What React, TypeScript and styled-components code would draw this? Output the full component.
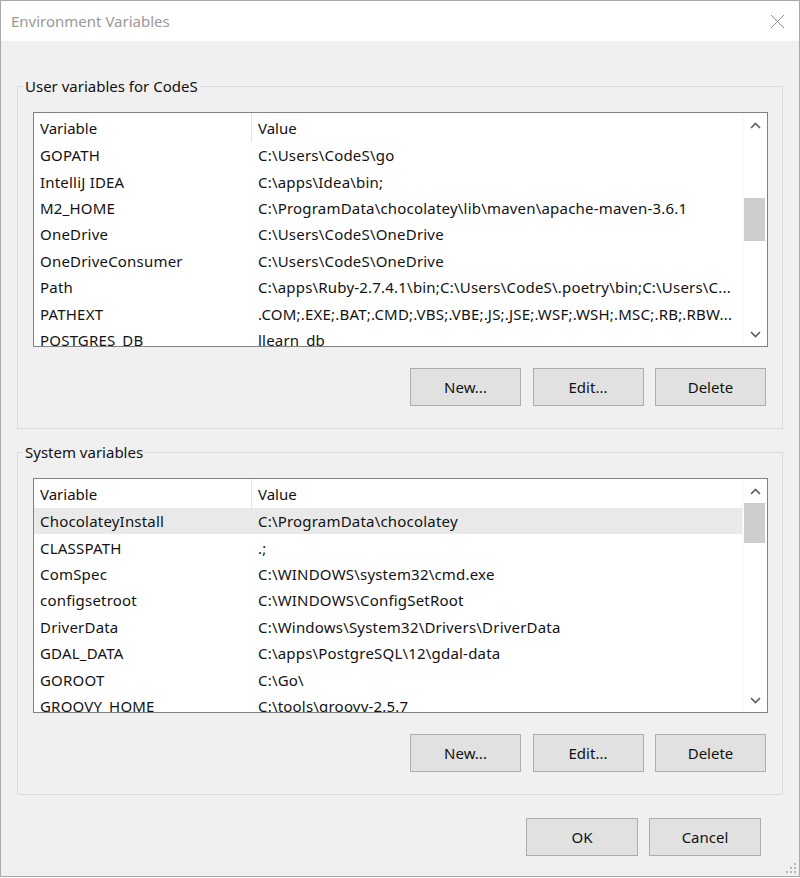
import React from "react";
import styled, { createGlobalStyle } from "styled-components";

const GlobalStyle = createGlobalStyle`
  html, body {
    margin: 0;
    padding: 0;
    background: #ffffff;
  }
  body {
    font-family: "Noto Sans", "Liberation Sans", sans-serif;
    font-size: 15px;
    color: #121212;
  }
  * {
    box-sizing: border-box;
  }
`;

const Window = styled.div`
  position: relative;
  width: 800px;
  height: 877px;
  border: 1px solid #a9a9a9;
  background: #f0f0f0;
  display: flex;
  flex-direction: column;
`;

const TitleBar = styled.div`
  height: 40px;
  flex-shrink: 0;
  background: #ffffff;
  display: flex;
  align-items: center;
  justify-content: space-between;
  padding: 0 14px 0 10px;
  color: #999999;
`;

const Body = styled.div`
  flex: 1;
  display: flex;
  flex-direction: column;
  padding: 35px 15px 0 16px;
`;

const Group = styled.fieldset<{ $gapTop: number }>`
  width: 766px;
  margin: ${(p) => p.$gapTop}px 0 0 0;
  padding: 0;
  border: 1px solid #dcdcdc;
  min-width: 0;
`;

const Legend = styled.legend`
  margin-left: 5px;
  padding: 0 2px;
  line-height: 20px;
  font-size: 15px;
  color: #121212;
`;

const GroupInner = styled.div`
  padding: 16px 14px 22px 15px;
  display: flex;
  flex-direction: column;
`;

const ListView = styled.div`
  height: 235px;
  border: 1px solid #828282;
  background: #ffffff;
  display: flex;
  overflow: hidden;
`;

const Rows = styled.div`
  flex: 1;
  display: flex;
  flex-direction: column;
  overflow: hidden;
  border-right: 1px solid #f3f3f3;
`;

const HeaderRow = styled.div`
  flex-shrink: 0;
  height: 29px;
  display: grid;
  grid-template-columns: 218px 1fr;
  align-items: stretch;
`;

const HeaderCell = styled.div<{ $divider?: boolean }>`
  display: flex;
  align-items: center;
  padding-left: 6px;
  border-right: ${(p) => (p.$divider ? "1px solid #e5e5e5" : "none")};
`;

const Row = styled.div<{ $selected?: boolean }>`
  flex-shrink: 0;
  height: 26.4px;
  display: grid;
  grid-template-columns: 218px 1fr;
  align-items: center;
  background: ${(p) => (p.$selected ? "#e9e9e9" : "transparent")};
`;

const Cell = styled.div`
  padding-left: 6px;
  white-space: nowrap;
  overflow: hidden;
  letter-spacing: 0.2px;
`;

const ScrollBar = styled.div`
  width: 24px;
  flex-shrink: 0;
  display: flex;
  flex-direction: column;
  background: #ffffff;
`;

const ArrowBox = styled.div`
  height: 24px;
  flex-shrink: 0;
  display: flex;
  align-items: center;
  justify-content: center;
  padding-left: 1px;
`;

const Track = styled.div`
  flex: 1;
  display: flex;
  flex-direction: column;
`;

const Thumb = styled.div<{ $offset: number; $size: number }>`
  margin: ${(p) => p.$offset}px 0 0 1px;
  width: 21px;
  height: ${(p) => p.$size}px;
  background: #cdcdcd;
`;

const ButtonRow = styled.div<{ $gapTop: number; $inset: number; $gap: number }>`
  display: flex;
  justify-content: flex-end;
  gap: ${(p) => p.$gap}px;
  margin-top: ${(p) => p.$gapTop}px;
  padding-right: ${(p) => p.$inset}px;
`;

const Button = styled.button<{ $w: number }>`
  width: ${(p) => p.$w}px;
  height: 38px;
  border: 1px solid #adadad;
  background: #e1e1e1;
  font-family: "Noto Sans", "Liberation Sans", sans-serif;
  font-size: 15px;
  color: #121212;
  padding: 0;
  cursor: default;
`;

const Grip = styled.svg`
  position: absolute;
  right: 2px;
  bottom: 2px;
`;

type Variable = { name: string; value: string };

const userVars: Variable[] = [
  { name: "GOPATH", value: "C:\\Users\\CodeS\\go" },
  { name: "IntelliJ IDEA", value: "C:\\apps\\Idea\\bin;" },
  { name: "M2_HOME", value: "C:\\ProgramData\\chocolatey\\lib\\maven\\apache-maven-3.6.1" },
  { name: "OneDrive", value: "C:\\Users\\CodeS\\OneDrive" },
  { name: "OneDriveConsumer", value: "C:\\Users\\CodeS\\OneDrive" },
  { name: "Path", value: "C:\\apps\\Ruby-2.7.4.1\\bin;C:\\Users\\CodeS\\.poetry\\bin;C:\\Users\\C..." },
  { name: "PATHEXT", value: ".COM;.EXE;.BAT;.CMD;.VBS;.VBE;.JS;.JSE;.WSF;.WSH;.MSC;.RB;.RBW..." },
  { name: "POSTGRES_DB", value: "llearn_db" },
];

const systemVars: Variable[] = [
  { name: "ChocolateyInstall", value: "C:\\ProgramData\\chocolatey" },
  { name: "CLASSPATH", value: ".;" },
  { name: "ComSpec", value: "C:\\WINDOWS\\system32\\cmd.exe" },
  { name: "configsetroot", value: "C:\\WINDOWS\\ConfigSetRoot" },
  { name: "DriverData", value: "C:\\Windows\\System32\\Drivers\\DriverData" },
  { name: "GDAL_DATA", value: "C:\\apps\\PostgreSQL\\12\\gdal-data" },
  { name: "GOROOT", value: "C:\\Go\\" },
  { name: "GROOVY_HOME", value: "C:\\tools\\groovy-2.5.7" },
];

function Chevron({ up }: { up?: boolean }) {
  return (
    <svg width="11" height="7" viewBox="0 0 11 7">
      <polyline
        points={up ? "1,6 5.5,1.5 10,6" : "1,1 5.5,5.5 10,1"}
        fill="none"
        stroke="#5f5f5f"
        strokeWidth="1.7"
      />
    </svg>
  );
}

function VariableList({ items, selected, thumbOffset, thumbSize }: {
  items: Variable[];
  selected?: number;
  thumbOffset: number;
  thumbSize: number;
}) {
  return (
    <ListView>
      <Rows>
        <HeaderRow>
          <HeaderCell $divider>Variable</HeaderCell>
          <HeaderCell>Value</HeaderCell>
        </HeaderRow>
        {items.map((item, index) => (
          <Row key={item.name} $selected={index === selected}>
            <Cell>{item.name}</Cell>
            <Cell>{item.value}</Cell>
          </Row>
        ))}
      </Rows>
      <ScrollBar>
        <ArrowBox><Chevron up /></ArrowBox>
        <Track>
          <Thumb $offset={thumbOffset} $size={thumbSize} />
        </Track>
        <ArrowBox><Chevron /></ArrowBox>
      </ScrollBar>
    </ListView>
  );
}

function App() {
  return (
    <>
      <GlobalStyle />
      <Window>
        <TitleBar>
          <span>Environment Variables</span>
          <svg width="15" height="15" viewBox="0 0 15 15">
            <path d="M1 1 L14 14 M14 1 L1 14" stroke="#8c8c8c" strokeWidth="1" fill="none" />
          </svg>
        </TitleBar>
        <Body>
          <Group $gapTop={0}>
            <Legend>User variables for CodeS</Legend>
            <GroupInner>
              <VariableList items={userVars} thumbOffset={61} thumbSize={43} />
              <ButtonRow $gapTop={21} $inset={2} $gap={11.5}>
                <Button $w={111}>New...</Button>
                <Button $w={111}>Edit...</Button>
                <Button $w={111}>Delete</Button>
              </ButtonRow>
            </GroupInner>
          </Group>
          <Group $gapTop={13}>
            <Legend>System variables</Legend>
            <GroupInner>
              <VariableList items={systemVars} selected={0} thumbOffset={0} thumbSize={40} />
              <ButtonRow $gapTop={21} $inset={2} $gap={11.5}>
                <Button $w={111}>New...</Button>
                <Button $w={111}>Edit...</Button>
                <Button $w={111}>Delete</Button>
              </ButtonRow>
            </GroupInner>
          </Group>
          <ButtonRow $gapTop={23} $inset={23} $gap={11}>
            <Button $w={112}>OK</Button>
            <Button $w={112}>Cancel</Button>
          </ButtonRow>
        </Body>
        <Grip width="12" height="12" viewBox="0 0 12 12">
          {[[10, 2], [10, 6], [6, 6], [10, 10], [6, 10], [2, 10]].map(([x, y]) => (
            <rect key={`${x}-${y}`} x={x - 1} y={y - 1} width="2" height="2" fill="#b5b5b5" />
          ))}
        </Grip>
      </Window>
    </>
  );
}

export default App;
